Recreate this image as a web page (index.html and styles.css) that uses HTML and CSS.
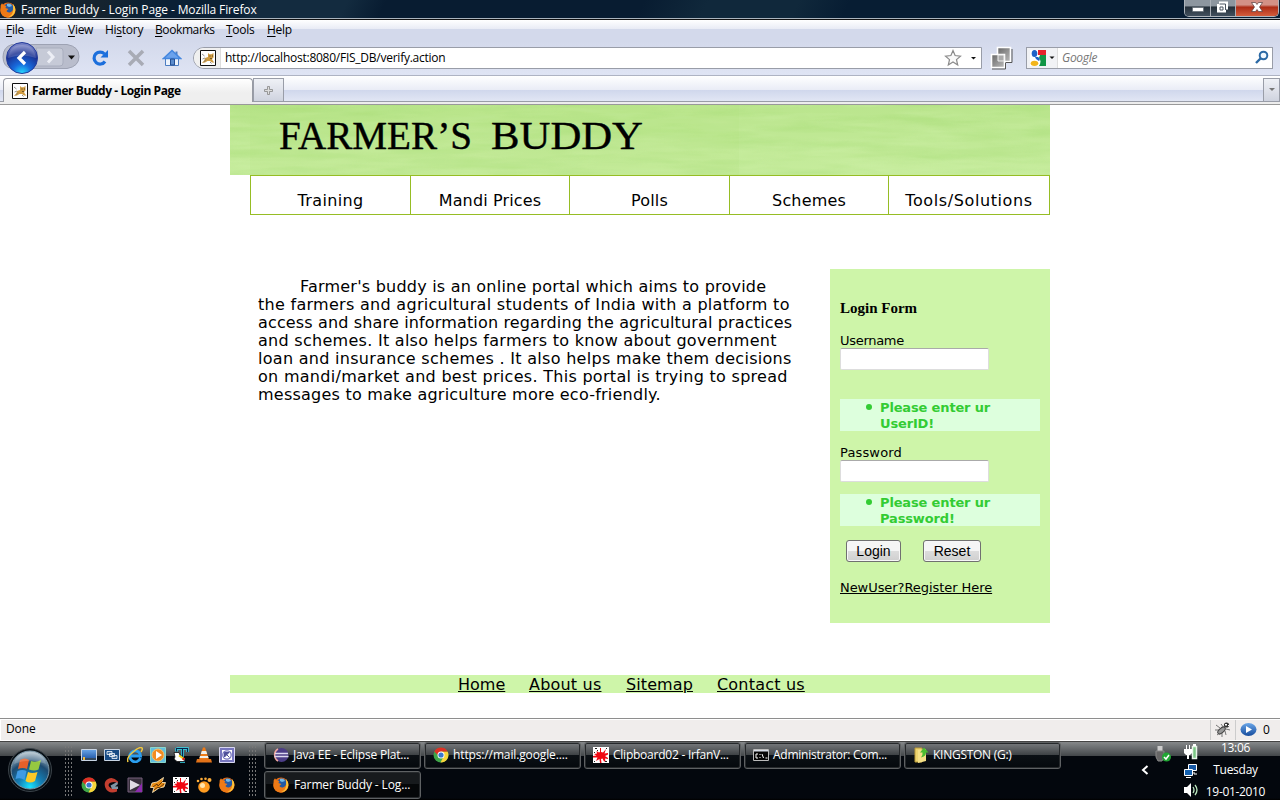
FILE: index.html
```html
<!DOCTYPE html>
<html lang="en">
<head>
<meta charset="utf-8">
<title>Farmer Buddy - Login Page</title>
<link rel="stylesheet" href="styles.css">
</head>
<body>
<svg class="defs" width="0" height="0">
  <defs>
    <radialGradient id="orb" cx="50%" cy="100%" r="90%"><stop offset="0" stop-color="#27e0ff"/><stop offset=".35" stop-color="#1769dc"/><stop offset=".75" stop-color="#1b3192"/><stop offset="1" stop-color="#7580c4"/></radialGradient>
    <radialGradient id="start" cx="50%" cy="95%" r="90%"><stop offset="0" stop-color="#18e5ff"/><stop offset=".35" stop-color="#147fb5"/><stop offset=".7" stop-color="#1d4a70"/><stop offset="1" stop-color="#a9bcc8"/></radialGradient>
    <linearGradient id="blue" x2="0" y2="1"><stop offset="0" stop-color="#6aa6e8"/><stop offset="1" stop-color="#164b9c"/></linearGradient>
    <linearGradient id="grey" x2="1" y2="1"><stop offset="0" stop-color="#666"/><stop offset="1" stop-color="#bbb"/></linearGradient>
    <symbol id="firefox" viewBox="0 0 16 16"><circle cx="8" cy="8" r="7.600" fill="#e66a12"/><circle cx="8.700" cy="6.600" r="5" fill="#235aa5"/><path d="M7 2q4-1 5 2l-3 1-2-1z" fill="#70b9e8"/><path d="M.7 3.200 2 1.300l1.400 2 3 .7-1 2 3 1-2 2q1 2 4 1.300 3-1 3.300-6.600 2.400 4 .8 7.500Q12 16 7 15.600 1 14.500 .4 9z" fill="#ee7a16"/><path d="M13 2q3.500 4 1.700 8.500-2 4.500-6.500 4.500 5-2 5-7z" fill="#fbc53b"/></symbol>
    <symbol id="chrome" viewBox="0 0 16 16"><circle cx="8" cy="8" r="7.500" fill="#3fa648"/><path d="M1.300 4.500A7.500 7.500 0 0 1 14.700 4.800H8L4.800 8z" fill="#df2f25"/><path d="M14.700 4.800A7.500 7.500 0 0 1 7.500 15.500L11.300 8 8 4.800z" fill="#f8d43b"/><circle cx="8" cy="8" r="3.500" fill="#fff"/><circle cx="8" cy="8" r="2.600" fill="#3977cf"/></symbol>
    <symbol id="tomcat" viewBox="0 0 16 16"><path d="M.5.5h15v15H.5z" fill="#fff" stroke="#111"/><path d="M8 3l1.500 1.200h2L13.500 3v4.500L12 9l1 2 1.500 1.500H12L10 11H7.500L5 12.500 2 13l2.500-3L5 8l3-1z" fill="#d09c42"/><path d="M2 4l2.500 2M2.500 9L5 8M4 12l2-2.500M10 12l1.500 1.500" stroke="#777" stroke-width=".8" fill="none"/><path d="M9.500 5.500h1v1h-1zM12 5.500h1v1h-1zM10 8h2v.7h-2z" fill="#544020"/></symbol>
    <symbol id="splat" viewBox="0 0 16 16"><path d="M0 0h16v16H0z" fill="#fff"/><path d="M8 1v4l2 .5L13 2l-1.500 4.500L15 6v1.500l-3 1.500 3 2v1l-3-.5.5 3H11l-1.500-3L8 12l.5 4H7l-.5-4L3 14l1.500-3.500H0V9l3.500-.5L1 7l3-.5L3.500 4 6 5.500 7 5V1z" fill="#f00712"/><path d="M2 1h2v1H2zM4 3h1v1H4zM13 1h1v1h-1zM1 5h1v1H1zM12 14h2v1h-2zM1 14h1v1H1z" fill="#222"/></symbol>
  </defs>
</svg>

<header class="titlebar">
  <svg class="i16"><use href="#firefox"/></svg>
  <span class="title">Farmer Buddy - Login Page - Mozilla Firefox</span>
  <div class="wincontrols">
    <span class="min"><svg width="26" height="15"><path d="M7.500 7.500h11v4h-11z" fill="#fff" stroke="#58616c" stroke-width=".6"/></svg></span>
    <span class="max"><svg width="25" height="15"><path d="M8 1.500h9v8h-2v3H6V4h2z" fill="#fff"/><path d="M8.500 4h6v6M9 7h3v3H9z" fill="none" stroke="#4b5560"/></svg></span>
    <span class="close"><svg width="42" height="15"><path d="M15.500 2.500h4L21 4.500l1.500-2h4L23.500 7l3 4.500h-4L21 9.500l-1.500 2h-4L18.500 7z" fill="#fff" stroke="#553b3b" stroke-width=".7"/></svg></span>
  </div>
</header>

<nav class="menubar">
  <span class="m1"><u>F</u>ile</span><span class="m2"><u>E</u>dit</span><span class="m3"><u>V</u>iew</span><span class="m4">Hi<u>s</u>tory</span><span class="m5"><u>B</u>ookmarks</span><span class="m6"><u>T</u>ools</span><span class="m7"><u>H</u>elp</span>
</nav>

<div class="toolbar">
  <svg class="backfwd" width="80" height="34" viewBox="0 0 80 34">
    <path d="M12 3.500H67q12 2 12 12t-12 12H12Q3 26 3 16T12 3.500z" fill="#b9bdcc" stroke="#9da2b3"/>
    <path d="M36 7h24q3 0 3 3v12q0 3-3 3H34q6-9 2-18z" fill="#c6cad7" stroke="#a9aebe"/>
    <path d="M48 10.500l5 5.500-5 5.500" fill="none" stroke="#eceef5" stroke-width="3"/>
    <circle cx="22" cy="17" r="15.500" fill="url(#orb)" stroke="#233b9c"/>
    <path d="M8 17q2-13 14-13t14 13q-14-5-28 0z" fill="#fff" opacity=".17"/>
    <path d="M25 11l-6 6 6 6" fill="none" stroke="#fff" stroke-width="3.200"/>
    <path d="M68 14.500h7l-3.500 4z" fill="#111"/>
  </svg>
  <svg class="reload" width="18" height="18"><path d="M13.500 5A6 6 0 1 0 14 12.500" fill="none" stroke="#1c6fdc" stroke-width="3.200"/><path d="M17 1v7.500H9.500z" fill="#1c6fdc"/></svg>
  <svg class="stop" width="18" height="18"><path d="M2 2l14 14M16 2L2 16" stroke="#a8abb5" stroke-width="3.500"/></svg>
  <svg class="home" width="20" height="18"><path d="M3.500 9.500h13v7h-13z" fill="#edf3fc" stroke="#4c7dc2"/><path d="M13.500 2.500h2v4h-2z" fill="#4c7dc2"/><path d="M1.500 9.500L10 1.500l8.500 8z" fill="#6ba2ec" stroke="#4487df" stroke-width="1.600"/><path d="M8.500 10h4v6h-4z" fill="#5b8ccd" stroke="#244f92"/></svg>
  <div class="urlbox">
    <span class="site"><svg class="i16"><use href="#tomcat"/></svg></span>
    <span class="url">http://localhost:8080/FIS_DB/verify.action</span>
    <svg width="37" height="20"><path d="M9 2.500l2.100 5 5.400.6-4 3.500 1.200 5.400-4.700-3-4.700 3 1.200-5.400-4-3.500 5.400-.6z" fill="#fafafa" stroke="#8b8b8b" stroke-width="1.200"/><path d="M27 9h5l-2.500 2.500z" fill="#111"/></svg>
  </div>
  <svg class="layers" width="24" height="26"><path d="M8.500 2.500h13v14h-13z" fill="url(#grey)" stroke="#fff" stroke-width="1.600"/><path d="M2.500 9.500h13v13h-13z" fill="url(#grey)" stroke="#fff" stroke-width="1.600"/><path d="M9 10h6v6H9z" fill="#aaa" stroke="#eee"/><path d="M3 24h13.500v-6.500M23 4v13.500h-6" fill="none" stroke="#555"/></svg>
  <div class="searchbox">
    <svg class="engine" width="31" height="20"><path d="M3 2h16v16H3z" fill="#fff"/><path d="M11 2h8v5h-8z" fill="#e5222b"/><path d="M13 7h6v11h-7q3-5 0-8z" fill="#109545"/><ellipse cx="7.500" cy="5.500" rx="2.800" ry="3.500" fill="#1f62c8"/><path d="M8 9h3q3 2 1 4L9 11z" fill="#1f62c8"/><ellipse cx="7.500" cy="15.300" rx="3.800" ry="2.600" fill="#f2b51b"/><path d="M22.500 8.500h5L25 11z" fill="#111"/></svg>
    <span class="hint">Google</span>
    <svg width="19" height="20"><circle cx="10.500" cy="7.500" r="3.800" fill="#f0f8ff" stroke="#2b69a5" stroke-width="2"/><path d="M7.500 10.500L3 15" stroke="#2b69a5" stroke-width="2.400"/></svg>
  </div>
</div>

<div class="tabbar">
  <div class="tab"><svg class="i16"><use href="#tomcat"/></svg><span>Farmer Buddy - Login Page</span></div>
  <div class="newtab"><svg width="9" height="9"><path d="M3.500.5h2v3h3v2h-3v3h-2v-3h-3v-2h3z" fill="#ddd" stroke="#858585" stroke-width=".8"/></svg></div>
  <div class="alltabs"><svg width="6" height="4"><path d="M0 0h6L3 3z" fill="#777"/></svg></div>
</div>
<div class="tabline"></div>

<main class="content">
  <div class="page">
    <svg class="banner" width="820" height="70" viewBox="0 0 820 70">
      <defs>
        <linearGradient id="field" x2="0" y2="1"><stop offset="0" stop-color="#bae58d"/><stop offset="1" stop-color="#c6ec9d"/></linearGradient>
        <filter id="grass" x="0" y="0" width="100%" height="100%" color-interpolation-filters="sRGB"><feTurbulence type="fractalNoise" baseFrequency=".011 .09" numOctaves="3" seed="8"/><feColorMatrix values="0 0 0 0 .6  0 0 0 0 .84  0 0 0 0 .4  2.200 0 0 0 -.9"/></filter>
        <filter id="shine" x="0" y="0" width="100%" height="100%" color-interpolation-filters="sRGB"><feTurbulence type="fractalNoise" baseFrequency=".015 .12" numOctaves="3" seed="21"/><feColorMatrix values="0 0 0 0 .84  0 0 0 0 .96  0 0 0 0 .7  0 2.200 0 0 -.95"/></filter>
      </defs>
      <rect width="820" height="70" fill="url(#field)"/>
      <rect width="820" height="70" filter="url(#grass)" opacity=".3"/>
      <rect width="820" height="70" filter="url(#shine)" opacity=".3"/>
      <path d="M20 0h489v70H20z" fill="#a9e174" opacity=".12"/>
      <text x="49" y="44" textLength="193" lengthAdjust="spacingAndGlyphs" class="logo">FARMER’S</text>
      <text x="261" y="44" textLength="152" lengthAdjust="spacingAndGlyphs" class="logo">BUDDY</text>
    </svg>
    <nav class="sections"><a>Training</a><a>Mandi Prices</a><a>Polls</a><a>Schemes</a><a>Tools/Solutions</a></nav>
    <div class="columns">
      <p class="intro"><span class="first l1">Farmer's buddy is an online portal which aims to provide</span><span class="l2">the farmers and agricultural students of India with a platform to</span><span class="l3">access and share information regarding the agricultural practices</span><span class="l4">and schemes. It also helps farmers to know about government</span><span class="l5">loan and insurance schemes . It also helps make them decisions</span><span class="l6">on mandi/market and best prices. This portal is trying to spread</span><span class="l7">messages to make agriculture more eco-friendly.</span></p>
      <form class="login">
        <h4>Login Form</h4>
        <label for="user">Username</label>
        <input id="user" type="text">
        <ul class="err-user"><li>Please enter ur<br>UserID!</li></ul>
        <label for="pass">Password</label>
        <input id="pass" type="password">
        <ul class="err-pass"><li>Please enter ur<br>Password!</li></ul>
        <div class="buttons"><button type="button" class="b-login">Login</button><button type="button" class="b-reset">Reset</button></div>
        <a class="register">NewUser?Register Here</a>
      </form>
    </div>
    <footer class="links"><a class="f1">Home</a><a class="f2">About us</a><a class="f3">Sitemap</a><a class="f4">Contact us</a></footer>
  </div>
</main>

<div class="status">
  <span class="done">Done</span>
  <span class="cell bug"><svg width="17" height="17"><path d="M2 4l4 3M1 9l5 0M3 14l4-3M7 3l3 4M12 14l-1-4M16 9l-4-1M8 16l0-4" stroke="#777"/><ellipse cx="7.500" cy="9.500" rx="2.300" ry="4.500" transform="rotate(48 7.500 9.500)" fill="#999" stroke="#444"/><circle cx="12.500" cy="4" r="2.600" fill="#333"/><path d="M11 3h2v1.500h-2zM14 4h1v1h-1z" fill="#fff"/></svg></span>
  <span class="cell play"><svg width="17" height="16"><ellipse cx="8.500" cy="7.500" rx="8" ry="6.500" fill="url(#blue)"/><path d="M6 4l6 3.500-6 3.500z" fill="#fff"/></svg><span>0</span></span>
</div>

<footer class="taskbar">
  <svg class="startorb" width="46" height="46"><circle cx="23" cy="23" r="21.500" fill="#0a1218" stroke="#3b4349"/><circle cx="23" cy="23" r="19" fill="url(#start)" stroke="#7e98a8"/><path d="M13 13q5-3 9 0l-2 9q-4-2-9 0z" fill="#e5602a"/><path d="M24 14q5 2 10-1l-2.500 9.500q-4 2-9.500 0z" fill="#95c840"/><path d="M10.500 24q5-2 9 0l-2 9q-4-3-9-1z" fill="#3f9be4"/><path d="M21 25q4 2 9.500 0L28 34q-5 3-9.500 0z" fill="#fbc928"/><path d="M7 17q3-12 16-12t16 12q-16-7-32 0z" fill="#fff" opacity=".17"/></svg>
  <div class="grip g1"></div>
  <div class="quick">
    <svg viewBox="0 0 16 16"><path d="M.5 2.500h15v11H.5z" fill="url(#blue)" stroke="#c8d4e3"/><path d="M1 11h14v2H1z" fill="#33485e"/><path d="M2 10h2v3H2z" fill="#f1bb40"/></svg>
    <svg viewBox="0 0 16 16"><path d="M.5 2.500h15v11H.5z" fill="#174b85" stroke="#c8d4e3"/><path d="M3 4.500h5v3H3zM5.500 6.500h5v3h-5zM8 8.500h5v3H8z" fill="#3f6c9c" stroke="#f4f8fc" stroke-width=".8"/></svg>
    <svg viewBox="0 0 16 16"><path d="M13.500 11A5.500 5.500 0 1 1 13 6.500L13.500 9H4" fill="none" stroke="#2b9ff0" stroke-width="2.800"/><path d="M1 15Q-1 11 6 5t9-4q1 1-1 4" fill="none" stroke="#efc740" stroke-width="1.500"/></svg>
    <svg viewBox="0 0 16 16"><path d="M.5.5h15v15H.5z" fill="#61bee0" stroke="#8bd6c9"/><circle cx="8" cy="8" r="6" fill="#f28b22" stroke="#f7c26a"/><path d="M6 4l6 4-6 4z" fill="#fff"/></svg>
    <svg viewBox="0 0 16 16"><path d="M3.500 1v3.500M3.500 1.500h11V5M9.500 2v12M7 14.500h5" fill="none" stroke="#35dbed" stroke-width="2.600"/><path d="M3.500 1v3.500M3.500 1.500h11V5M9.500 2v12M7 14.500h5" fill="none" stroke="#06234c" stroke-width="1.200"/><path d="M1 5.500h5L7 8l5 3.500-1 3H4L1 12l1-2z" fill="#fff" stroke="#111" stroke-width=".8"/><path d="M6 8.500l5 3.500" stroke="#f3d514" stroke-width="1.800"/><path d="M9.500 11.500l2 1" stroke="#e21a13" stroke-width="2"/></svg>
    <svg viewBox="0 0 16 16"><path d="M7 .5h2l4 12H3z" fill="#ef7c17"/><path d="M5.800 4h4.400l1 3H4.800zM4 9h8l.6 2H3.400z" fill="#f1efe9"/><path d="M1 12h14l1 3.500H0z" fill="#e37319"/></svg>
    <svg viewBox="0 0 16 16"><path d="M.5.5h15v15H.5z" fill="#7776bf" stroke="#d8d7f0"/><path d="M3 3h10v10H3z" fill="#fff"/><circle cx="8" cy="8" r="4.200" fill="none" stroke="#7776bf" stroke-width="1.300"/><path d="M5.500 5.500h4.500L5.500 10zM7 7l3.500 3.500" fill="#4e5099" stroke="#4e5099"/></svg>
    <svg><use href="#chrome"/></svg>
    <svg viewBox="0 0 16 16"><path d="M14 4.500Q9-1 4 2T1.500 11q3 6.500 11.500 3.500V11q-5 2-7.500-1T7 5.500t7 1z" fill="#c33e30"/><path d="M6.500 8.500L13 5l1 2-3 2.500h3V12H8z" fill="#8294a4"/></svg>
    <svg viewBox="0 0 16 16"><path d="M1 1h14v14H1z" fill="#38303d" stroke="#77617d"/><path d="M8 15l7-9v9z" fill="#8d2caf"/><path d="M3 3l10 5-10 5z" fill="#dfdce4"/></svg>
    <svg viewBox="0 0 16 16"><path d="M13.500 .5L12 5.500h3.500L14 10l-5 1-6.500 4.500L4 10.500H.5L2 6l5-1z" fill="#ea8d15" stroke="#fff1c9" stroke-width=".8"/><path d="M3 10l4-3 1 2 5-5M4 13l4-3 1 1 5-4" fill="none" stroke="#673b0a"/></svg>
    <svg><use href="#splat"/></svg>
    <svg viewBox="0 0 16 16"><circle cx="8" cy="10" r="5.800" fill="#ff9c21"/><circle cx="6.500" cy="8.500" r="2.500" fill="#ffe4ac"/><g fill="#ffad39"><circle cx="2" cy="4" r="1.300"/><circle cx="5.500" cy="2" r="1.300"/><circle cx="9.500" cy="1.800" r="1.300"/><circle cx="13.500" cy="3" r="2"/></g></svg>
    <svg><use href="#firefox"/></svg>
  </div>
  <div class="grip g2"></div>
  <div class="tasks">
    <div class="task"><svg viewBox="0 0 16 16"><circle cx="8.500" cy="8" r="7" fill="#4b3c86"/><path d="M5 2a7 7 0 0 0 0 12" fill="none" stroke="#f0a7a0" stroke-width="1.500"/><path d="M2 6.500h13M1.500 9.500h14" stroke="#dcd8ef" stroke-width="1.300"/></svg><span class="t1">Java EE - Eclipse Plat...</span></div>
    <div class="task"><svg><use href="#chrome"/></svg><span class="t2">https://mail.google....</span></div>
    <div class="task"><svg><use href="#splat"/></svg><span class="t3">Clipboard02 - IrfanV...</span></div>
    <div class="task"><svg viewBox="0 0 16 16"><path d="M.5 2.500h15v11H.5z" fill="#050505" stroke="#bbb"/><path d="M1 3h14v1.500H1z" fill="#d5dbe5"/><path d="M5 7H3v4h2M7 7v1m0 2v1M9 7l1.500 4m2 0h2" fill="none" stroke="#fff"/></svg><span class="t4">Administrator: Com...</span></div>
    <div class="task"><svg viewBox="0 0 16 16"><path d="M2 1h7v14H2z" fill="#ecd36f" stroke="#b99a39"/><path d="M5 3l8-1v12l-8 2z" fill="#f4df86"/><path d="M11 .5l4.500 5H13q0 4-5 5 2-2 1.500-5H7z" fill="#4bbb31"/></svg><span class="t5">KINGSTON (G:)</span></div>
    <div class="task active"><svg><use href="#firefox"/></svg><span class="t6">Farmer Buddy - Log...</span></div>
  </div>
  <svg class="chev" width="8" height="10"><path d="M6.500 1L2 5l4.500 4" fill="none" stroke="#fff" stroke-width="2"/></svg>
  <svg class="usb" width="17" height="18"><path d="M2.500 1h5v5h-5z" fill="#ccc"/><path d="M1 6h8v6l-2 4H3l-2-4z" fill="#666" stroke="#888"/><circle cx="11.500" cy="12" r="4.500" fill="#21a634"/><path d="M9 12l2 2 3-4" fill="none" stroke="#fff" stroke-width="1.500"/></svg>
  <div class="trayicons">
    <svg width="16" height="16"><path d="M9.500 2.500h4v12h-4z" fill="#7ac785" stroke="#e9f5ea" stroke-width="1.500"/><path d="M10 0h3v2h-3z" fill="#fff"/><path d="M1 5h8v4l-2 2H3L1 9zM3 1h1v4H3zM6 1h1v4H6zM4 11h2v4H4z" fill="#fff"/></svg>
    <svg width="16" height="16"><path d="M5.500 1.500h8v6h-8z" fill="#1759a6" stroke="#fff"/><path d="M1.500 6.500h8v6h-8z" fill="#1461af" stroke="#fff"/><path d="M3 14.500h5M11 9v2h3" fill="none" stroke="#fff"/></svg>
    <svg width="16" height="16"><path d="M1 5h3l4-4v14l-4-4H1z" fill="#fff"/><path d="M10 5q2 3 0 6M12 3q4 5 0 10" fill="none" stroke="#bce9bf" stroke-width="1.300"/></svg>
  </div>
  <div class="clock"><span>13:06</span><span>Tuesday</span><span>19-01-2010</span></div>
</footer>
</body>
</html>
```
FILE: styles.css
```css
* { box-sizing: border-box; }
body { margin: 0; width: 1280px; height: 800px; overflow: hidden; display: flex; flex-direction: column; background: #fff; font: 12px/16px "Open Sans", "Noto Sans", sans-serif; letter-spacing: -.27px; color: #000; }
svg { display: block; flex: none; }
.defs { position: absolute; }
.i16 { width: 16px; height: 16px; }
span { white-space: nowrap; }

.titlebar { height: 20px; flex: none; display: flex; align-items: center; background: linear-gradient(115deg, #15232f 0 8%, #0a2035 12% 19%, #132b3f 20% 27%, #081c31 30% 50%, #10283b 55% 62%, #071d33 66%); border-bottom: 1px solid #111; box-shadow: inset 0 -1px #aab4bd; color: #fff; }
.title { padding-left: 5px; flex: 1; letter-spacing: -.13px; }
.titlebar .i16 { margin-bottom: 0; }
.wincontrols { display: flex; height: 17px; width: 95px; margin: 0 1px 3px 0; border: 1px solid #aeb4bb; border-top: 0; border-radius: 0 0 5px 5px; overflow: hidden; }
.wincontrols span { border-right: 1px solid #aab0b7; background: linear-gradient(#8d969f 0 35%, #25303a 45%, #42505e); }
.wincontrols .min { width: 26px; }
.wincontrols .max { width: 25px; }
.wincontrols .close { width: 42px; border: 0; background: linear-gradient(#d39186 0 30%, #ad2c16 45%, #d45d3c); }

.menubar { height: 21px; padding: 2px 0 0 6px; display: flex; background: linear-gradient(#fff, #e8ebf5 9px, #d3d9eb 9px); }
.menubar u { text-underline-offset: 2px; }
.m1 { width: 30px; } .m2 { width: 32px; } .m3 { width: 37px; } .m4 { width: 50px; } .m5 { width: 71px; letter-spacing: -.4px; } .m6 { width: 41px; }

.toolbar { height: 35px; display: flex; align-items: center; background: linear-gradient(#d3d9eb, #dfe4f4); border-bottom: 1px solid #aeb3c3; }
.backfwd { margin-right: 11px; }
.reload { margin-right: 18px; }
.stop { margin-right: 17px; }
.home { margin-right: 11px; }
.urlbox { width: 789px; height: 22px; border: 1px solid #999da8; border-radius: 11px 0 0 11px; background: #fff; display: flex; align-items: center; }
.site { width: 27px; height: 20px; padding: 2px 0 0 6px; border-radius: 10px 0 0 10px; border-right: 1px solid #ddd; background: #f0f0f0; }
.url { flex: 1; padding-left: 4px; letter-spacing: -.25px; }
.layers { margin: 0 13px 0 7px; }
.searchbox { width: 247px; height: 22px; border: 1px solid #999da8; background: #fff; display: flex; align-items: center; }
.engine { background: #f1f2f5; border-right: 1px solid #ddd; }
.hint { flex: 1; padding-left: 4px; color: #777; font-style: italic; }

.tabbar { height: 26px; display: flex; align-items: flex-end; padding-left: 3px; background: linear-gradient(#fff, #e9ecf6 14px, #d0d7ec 14px, #e1e6f4); border-bottom: 1px solid #999da8; }
.tab { width: 250px; height: 24px; margin-bottom: -1px; display: flex; align-items: center; padding-left: 8px; gap: 4px; border: 1px solid #979aa3; border-bottom: 0; border-radius: 4px 4px 0 0; background: linear-gradient(#fff, #efefef 60%); font-weight: bold; letter-spacing: -.42px; }
.newtab, .alltabs { height: 23px; display: flex; align-items: center; justify-content: center; border: 1px solid #999da8; border-bottom: 0; background: linear-gradient(#eff1f6, #cfd3df); }
.newtab { width: 31px; }
.alltabs { width: 17px; margin-left: auto; }
.tabline { height: 3px; background: #ededed; border-bottom: 1px solid #999; }

.content { height: 613px; font-family: "DejaVu Sans", sans-serif; letter-spacing: 0; }
.page { width: 820px; margin: 0 auto; }
.logo { font: 41px "Liberation Serif", serif; stroke: #000; stroke-width: .4; }
.sections { height: 40px; margin-left: 20px; display: grid; grid-template-columns: 160px 159px 160px 159px 160px; border: 1px solid #96bd24; font-size: 16px; line-height: 20px; }
.sections a { padding-top: 15px; text-align: center; border-right: 1px solid #96bd24; letter-spacing: .15px; }
.sections a:first-child { letter-spacing: .35px; }
.sections a:last-child { border-right: 0; letter-spacing: .6px; }
.columns { margin-top: 54px; display: flex; justify-content: space-between; }
.intro { margin: 9px 0 0 28px; font-size: 16px; line-height: 18px; }
.intro span { display: block; }
.intro .first { padding-left: 42px; }
.l1 { letter-spacing: .22px; } .l2 { letter-spacing: .29px; } .l3 { letter-spacing: .15px; } .l4 { letter-spacing: .28px; } .l5 { letter-spacing: .29px; } .l6 { letter-spacing: .29px; } .l7 { letter-spacing: .23px; }
.login { width: 220px; height: 354px; background: #cef5a9; padding: 30px 10px 0; display: flex; flex-direction: column; font-size: 13px; line-height: 16px; }
.login h4 { margin: 0 0 15px; font: bold 15px/18px "Liberation Serif", serif; }
.login input { width: 149px; height: 22px; margin: 0; border: 1px solid #ddd; border-top-color: #aaa; border-radius: 2px; background: #fff; }
.login label { display: block; height: 16px; line-height: 18px; letter-spacing: -.3px; }
.login label[for="pass"] { letter-spacing: .15px; }
.login ul { margin: 0; padding: 0 0 0 40px; height: 32px; background: #dfd; color: #3c3; font-weight: bold; letter-spacing: -.15px; list-style: none; }
.login li { padding-top: 1px; }
.login li::before { content: ""; float: left; width: 6px; height: 6px; margin: 4px 0 0 -14px; border-radius: 50%; background: #3c3; }
.login .err-user { margin: 29px 0 13px; }
.login .err-pass { margin: 12px 0 14px; }
.buttons { display: flex; gap: 22px; padding-left: 6px; }
.buttons button { height: 22px; padding: 0; border: 1px solid #707070; border-radius: 3px; background: linear-gradient(#f5f5f5 0 48%, #ddd 50%, #cfcfcf); box-shadow: inset 0 0 0 1px #f7f7f7; font: 14px "Liberation Sans", sans-serif; color: #000; }
.b-login { width: 55px; } .b-reset { width: 58px; }
.register { margin-top: 18px; text-decoration: underline; letter-spacing: -.06px; }
.links { height: 18px; margin-top: 52px; padding-left: 228px; display: flex; background: #cef5a9; font-size: 16px; line-height: 20px; }
.links a { text-decoration: underline; }
.f1 { width: 71px; } .f2 { width: 97px; letter-spacing: .2px; } .f3 { width: 91px; letter-spacing: .1px; } .f4 { letter-spacing: .2px; }

.status { height: 23px; display: flex; align-items: center; border-top: 1px solid #8e8e8e; border-bottom: 1px solid #fff; background: #f0edec; box-shadow: inset 1px 1px #fff; }
.done { flex: 1; padding: 0 0 1px 6px; letter-spacing: -.1px; }
.cell { height: 20px; display: flex; align-items: center; border-left: 1px solid #ccc; }
.bug { width: 25px; padding-left: 3px; }
.play { width: 45px; padding-left: 4px; gap: 6px; }

.taskbar { height: 59px; display: flex; background: linear-gradient(#444 0 1px, #85888a 1px, #43474a 15px, #03070d 15px, #03070d 57px, #000); color: #fff; }
.startorb { margin: 6px 11px 0 7px; }
.grip { width: 9px; height: 53px; margin-top: 4px; background: radial-gradient(circle, #777 0 .7px, transparent 1px) 0 0 / 3px 4px; }
.quick { display: grid; grid-template-columns: repeat(7, 16px); grid-template-rows: 16px 16px; gap: 14px 7px; margin: 6px 13px 0 8px; align-content: start; }
.quick svg { width: 16px; height: 16px; }
.tasks { width: 800px; margin: 1px 0 0 7px; display: grid; grid-template-columns: repeat(5, 157px); grid-template-rows: 27px 28px; gap: 2px 3px; align-content: start; }
.task { display: flex; align-items: center; gap: 4px; padding: 0 0 1px 8px; border: 1px solid #5e6163; border-radius: 3px; background: linear-gradient(#777a7d, #3e4245 12px, #0b1015 12px, #05090d); box-shadow: inset 0 0 0 1px #26292c; }
.task.active { background: linear-gradient(#171a1d 0 12px, #050709 12px); }
.task svg { width: 16px; height: 16px; }
.t1 { letter-spacing: -.2px; }
.t2, .t6 { letter-spacing: -.13px; }
.t3, .t4 { letter-spacing: -.24px; }
.t6 { padding-left: 1px; }
.chev { margin: 24px 0 0 77px; }
.usb { margin: 4px 0 0 6px; }
.trayicons { margin: 3px 0 0 11px; display: flex; flex-direction: column; gap: 3px; }
.clock { width: 73px; display: flex; flex-direction: column; align-items: center; margin-top: -1px; line-height: 22px; }
.clock span:first-child { height: 19px; line-height: 16px; margin-bottom: 3px; }
.clock span:last-child { letter-spacing: -.33px; }
```
